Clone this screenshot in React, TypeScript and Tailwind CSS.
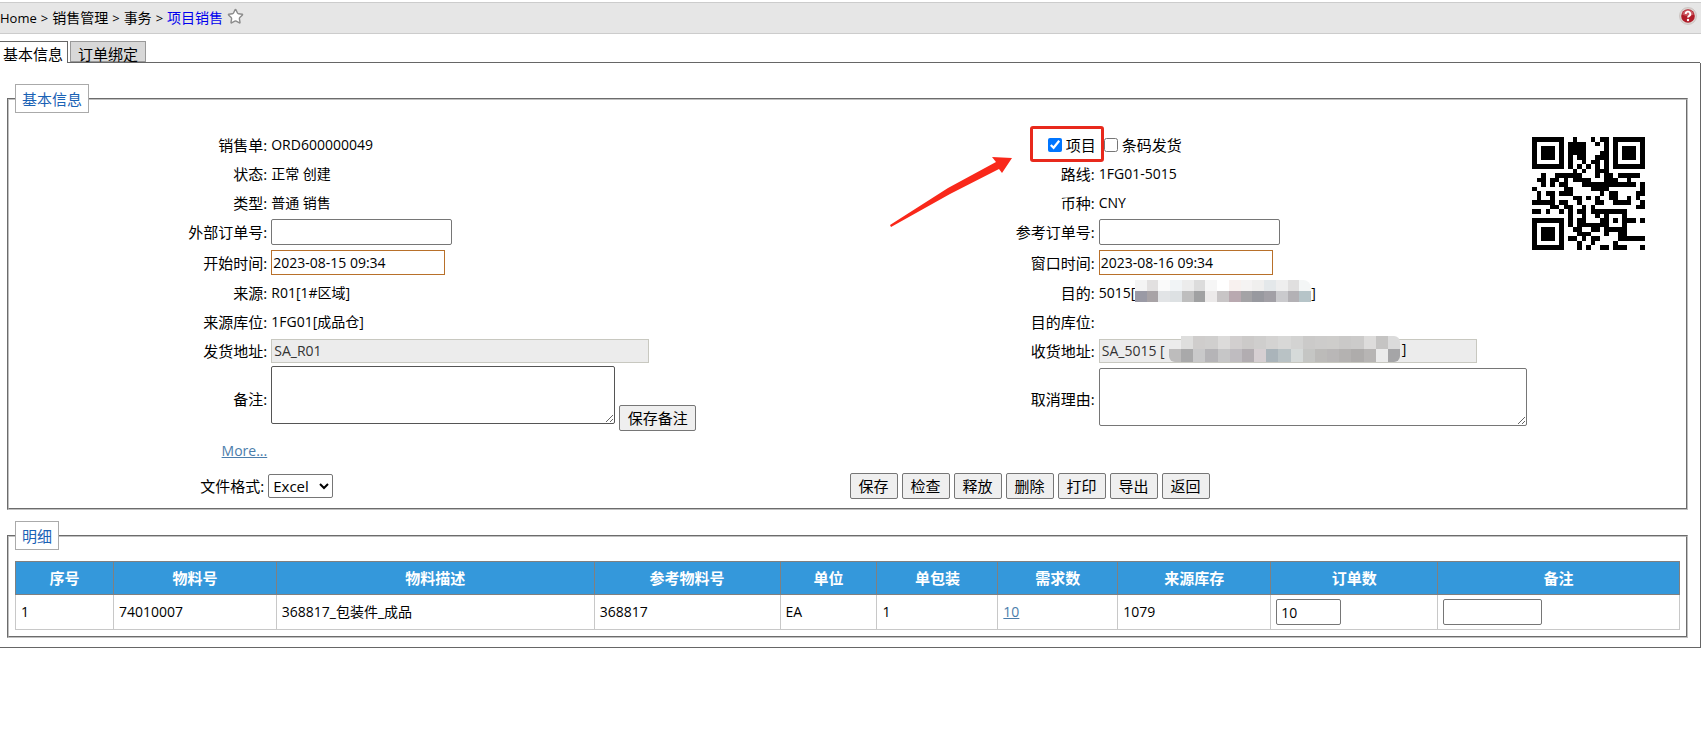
import React from 'react';
import { Star } from 'lucide-react';

const order = {
  code: 'ORD600000049',
  status: '正常 创建',
  type: '普通 销售',
  route: '1FG01-5015',
  currency: 'CNY',
  startTime: '2023-08-15 09:34',
  windowTime: '2023-08-16 09:34',
  source: 'R01[1#区域]',
  sourceBin: '1FG01[成品仓]',
  shipFrom: 'SA_R01',
};

const columns = [
  { title: '序号', width: 98 },
  { title: '物料号', width: 163 },
  { title: '物料描述', width: 318 },
  { title: '参考物料号', width: 186 },
  { title: '单位', width: 97 },
  { title: '单包装', width: 121 },
  { title: '需求数', width: 120 },
  { title: '来源库存', width: 153 },
  { title: '订单数', width: 167 },
  { title: '备注', width: 242 },
];
const totalWidth = columns.reduce((sum, c) => sum + c.width, 0);

const actions = ['保存', '检查', '释放', '删除', '打印', '导出', '返回'];

/* QR code, version 2, level H, mask 1, byte mode */
const QR_SIZE = 25;
const QR_DATA = 16;
const QR_ECC = 28;
const QR_FORMAT = '001001110111110';

const gfMul = (a: number, b: number) => {
  let r = 0;
  for (let i = 7; i >= 0; i--) {
    r = (r << 1) ^ ((r >> 7) * 0x11d);
    r ^= ((b >> i) & 1) * a;
  }
  return r;
};

const qrCodewords = (text: string) => {
  let bits = '0100' + text.length.toString(2).padStart(8, '0');
  for (const ch of text) bits += ch.charCodeAt(0).toString(2).padStart(8, '0');
  bits += '0000';
  const data: number[] = [];
  for (let i = 0; i < bits.length; i += 8) data.push(parseInt(bits.slice(i, i + 8), 2));
  for (let pad = 0xec; data.length < QR_DATA; pad ^= 0xec ^ 0x11) data.push(pad);

  const gen: number[] = new Array(QR_ECC).fill(0);
  gen[QR_ECC - 1] = 1;
  let root = 1;
  for (let i = 0; i < QR_ECC; i++) {
    for (let j = 0; j < QR_ECC; j++) {
      gen[j] = gfMul(gen[j], root) ^ (j + 1 < QR_ECC ? gen[j + 1] : 0);
    }
    root = gfMul(root, 2);
  }
  const ecc: number[] = new Array(QR_ECC).fill(0);
  data.forEach((d) => {
    const factor = d ^ ecc.shift()!;
    ecc.push(0);
    gen.forEach((g, i) => { ecc[i] ^= gfMul(g, factor); });
  });
  return [...data, ...ecc];
};

const qrMatrix = (text: string) => {
  const m: (number | null)[][] = Array.from({ length: QR_SIZE }, () => new Array(QR_SIZE).fill(null));
  for (let i = 0; i < QR_SIZE; i++) {
    m[6][i] = (i + 1) % 2;
    m[i][6] = (i + 1) % 2;
  }
  [[3, 3], [3, 21], [21, 3]].forEach(([cy, cx]) => {
    for (let dy = -4; dy <= 4; dy++) {
      for (let dx = -4; dx <= 4; dx++) {
        const y = cy + dy;
        const x = cx + dx;
        if (y < 0 || x < 0 || y >= QR_SIZE || x >= QR_SIZE) continue;
        const d = Math.max(Math.abs(dy), Math.abs(dx));
        m[y][x] = d === 2 || d === 4 ? 0 : 1;
      }
    }
  });
  for (let dy = -2; dy <= 2; dy++) {
    for (let dx = -2; dx <= 2; dx++) {
      m[18 + dy][18 + dx] = Math.max(Math.abs(dy), Math.abs(dx)) === 1 ? 0 : 1;
    }
  }
  const f = QR_FORMAT.split('').map(Number);
  for (let i = 0; i < 15; i++) {
    if (i < 7) {
      m[8][i < 6 ? i : 7] = f[i];
      m[24 - i][8] = f[i];
    } else {
      m[i < 9 ? 15 - i : 14 - i][8] = f[i];
      m[8][10 + i] = f[i];
    }
  }
  m[17][8] = 1;

  const words = qrCodewords(text);
  let n = 0;
  let up = true;
  for (let right = QR_SIZE - 1; right > 0; right -= 2) {
    if (right === 6) right = 5;
    for (let v = 0; v < QR_SIZE; v++) {
      const y = up ? QR_SIZE - 1 - v : v;
      for (const x of [right, right - 1]) {
        if (m[y][x] !== null) continue;
        const bit = n < words.length * 8 ? (words[n >> 3] >> (7 - (n & 7))) & 1 : 0;
        m[y][x] = bit ^ (y % 2 === 0 ? 1 : 0);
        n++;
      }
    }
    up = !up;
  }
  return m;
};

const QrCode = ({ text, className }: { text: string; className?: string }) => {
  const path = qrMatrix(text)
    .map((row, y) => row.map((on, x) => (on ? `M${x} ${y}h1v1h-1z` : '')).join(''))
    .join('');
  return (
    <svg viewBox="0 0 25 25" className={className} role="img" aria-label={text} shapeRendering="crispEdges">
      <path d={path} />
    </svg>
  );
};

/* Pixelated cover over private text, one row of tiles per list */
const Mosaic = ({ rows, className }: { rows: string[][]; className?: string }) => (
  <svg
    viewBox={`0 0 ${rows[0].length * 12} 24`}
    preserveAspectRatio="none"
    shapeRendering="crispEdges"
    className={className}
    aria-hidden="true"
  >
    {rows.map((row, y) =>
      row.map((fill, x) => <rect key={`${x}-${y}`} x={x * 12} y={y * 12} width="12" height="12" fill={fill} />)
    )}
  </svg>
);

const destMosaic = [
  ['#f4f4f4', '#e2e0e0', '#fafafa', '#f1f4f6', '#ececec', '#dcdcdc', '#f6f6f6', '#ffffff', '#f8f1ef', '#f5f3f3', '#f0efee', '#e4e8ea', '#eeeeee', '#e0dfdf', '#f4f6f6'],
  ['#9a9aa5', '#a8a3a6', '#e2e4e6', '#dde1e3', '#bebebe', '#a0a1a2', '#eceaea', '#c8c5c6', '#b9a9b0', '#a4a3a6', '#98999f', '#a2a0a6', '#cacacd', '#b3b1b5', '#b6c4c8'],
];
const addressMosaic = [
  ['none', '#dededd', '#cfcdcc', '#d0cfce', '#dcdbda', '#d2cfcf', '#cccac9', '#cfcecd', '#d4d3d2', '#d8d8d7', '#d3d3d2', '#cbcac9', '#cdcccb', '#cecdcb', '#cac9c8', '#cccbca', '#dddcdb', '#c5c4c3', '#dbdbdb'],
  ['#bdbcbc', '#a9a9aa', '#c9c9ca', '#b5b4b7', '#c6c6c7', '#bfbcc0', '#b2adb1', '#d6cfd2', '#aab4ba', '#b9c2c5', '#d6dad9', '#c5c6c4', '#bcbbb9', '#b9b7b7', '#b4b2b1', '#aeacab', '#b7b5b4', '#ebebeb', '#a5a5a7'],
];

const Label = ({ text, htmlFor }: { text: string; htmlFor?: string }) =>
  htmlFor ? (
    <label htmlFor={htmlFor} className="self-center pr-px text-right">{text}:</label>
  ) : (
    <span className="self-center pr-px text-right">{text}:</span>
  );

const Value = ({ children, wide }: { children?: React.ReactNode; wide?: boolean }) => (
  <div className={wide ? 'relative col-span-2 flex items-center pl-[3px] text-sm' : 'relative flex items-center pl-[3px] text-sm'}>
    {children}
  </div>
);

const Legend = ({ children }: { children: React.ReactNode }) => (
  <legend className="border border-[#aaaaaa] px-1.5 pt-1 pb-[3px] text-[#1a62b5]">{children}</legend>
);

const inputClass = 'h-[26px] rounded-[2px] border border-[#767676] bg-white px-1 text-sm';
const dateClass = 'h-[25px] w-[174px] border border-[#b8702a] bg-white px-px text-sm';
const readonlyClass = 'h-6 w-[378px] border border-[#c8c8c0] bg-[#ececec] px-0.5 text-sm text-[#333333]';
const buttonClass = 'h-[26px] rounded-[2px] border border-[#767676] bg-[#efefef]';
const fieldsetClass = 'min-w-0 border-2 border-[#c0c0c0] [border-style:groove] px-1.5 pb-1.5';

export default function App() {
  return (
    <div className="bg-white pt-0.5 font-['Open_Sans','Noto_Sans_CJK_SC',sans-serif] text-[15px] leading-5 text-black">
      {/* Breadcrumb */}
      <header className="flex h-8 items-center justify-between border-y border-[#cccccc] bg-[#e6e6e6] pr-1">
        <nav className="flex items-center gap-1 text-sm">
          <span className="text-[13px]">Home</span>
          <span className="text-[13px]">&gt;</span>
          <span>销售管理</span>
          <span className="text-[13px]">&gt;</span>
          <span>事务</span>
          <span className="text-[13px]">&gt;</span>
          <a href="#" className="text-[#0000ee]">项目销售</a>
          <button type="button" aria-label="收藏" className="mb-1">
            <Star size={17} strokeWidth={2} className="fill-white text-[#8c8c8c]" />
          </button>
        </nav>
        <button type="button" aria-label="帮助" className="mb-1">
          <svg viewBox="0 0 18 18" className="size-[18px]">
            <circle cx="9" cy="9" r="8.5" fill="#dcd5d2" stroke="#bdb3b0" strokeWidth="0.6" />
            <circle cx="9" cy="9" r="6.8" fill="#b01c28" />
            <path d="M3.2 7.5a6 6 0 0 1 11.6 0c-3 1.8-8.6 1.8-11.6 0z" fill="#cc5a62" />
            <path d="M6.7 7a2.3 2.3 0 1 1 3.5 1.9c-.8.5-1.2.8-1.2 1.7" fill="none" stroke="#fff" strokeWidth="1.9" />
            <circle cx="9" cy="13" r="1.2" fill="#fff" />
          </svg>
        </button>
      </header>

      {/* Tabs */}
      <div className="flex items-end border-r border-transparent pt-[7px]">
        <button type="button" className="h-[22px] border-t border-r border-[#666666] bg-white pt-0.5 pr-1 pl-[3px] leading-5">基本信息</button>
        <div className="flex h-[22px] flex-1 items-end border-b border-[#666666] pl-0.5">
          <button type="button" className="h-[21px] border border-[#999999] bg-[#d8d8d8] px-[7px] pt-0.5 leading-5">订单绑定</button>
        </div>
      </div>

      <main className="border-r border-b border-[#666666] pt-[21px] pr-3 pb-[9px] pl-[7px]">
        {/* Order header */}
        <fieldset className={fieldsetClass}>
          <Legend>基本信息</Legend>
          <div className="grid grid-cols-[15fr_35fr_15fr_25fr_10fr] grid-rows-[29px_29px_29px_30px_31px_29px_29px_29px_67px_38px] pt-[17px] pr-[5px] pl-[5px]">
            <div className="col-start-5 row-span-5 row-start-1 justify-self-end pt-[7px] pr-[30px]">
              <QrCode text={order.code} className="size-[113px]" />
            </div>

            <Label text="销售单" />
            <Value>{order.code}</Value>
            <div className="flex items-center justify-end">
              <div className="relative">
                <label className="flex items-center gap-1">
                  <input type="checkbox" defaultChecked className="size-[14px]" />
                  项目
                </label>
                <span className="absolute -top-[9px] -right-2 -bottom-[7px] -left-[18px] rounded-[3px] border-3 border-[#e8291c]" />
                <svg viewBox="0 0 124 72" className="absolute top-[21px] right-full mr-9 h-[72px] w-[124px]" aria-hidden="true">
                  <path d="M2 69L60 32L108 6L104 1L124 2L114 17L111 13L62 38L3 71z" fill="#f9281a" />
                </svg>
              </div>
            </div>
            <div className="flex items-center pl-2">
              <label className="flex items-center gap-1">
                <input type="checkbox" className="size-[14px]" />
                条码发货
              </label>
            </div>

            <Label text="状态" />
            <Value>{order.status}</Value>
            <Label text="路线" />
            <Value>{order.route}</Value>

            <Label text="类型" />
            <Value>{order.type}</Value>
            <Label text="币种" />
            <Value>{order.currency}</Value>

            <Label text="外部订单号" htmlFor="extOrder" />
            <Value><input id="extOrder" className={`${inputClass} w-[181px]`} /></Value>
            <Label text="参考订单号" htmlFor="refOrder" />
            <Value><input id="refOrder" className={`${inputClass} w-[181px]`} /></Value>

            <Label text="开始时间" htmlFor="startTime" />
            <Value><input id="startTime" defaultValue={order.startTime} className={dateClass} /></Value>
            <Label text="窗口时间" htmlFor="windowTime" />
            <Value><input id="windowTime" defaultValue={order.windowTime} className={dateClass} /></Value>

            <Label text="来源" />
            <Value>{order.source}</Value>
            <Label text="目的" />
            <Value wide>
              5015[
              <Mosaic rows={destMosaic} className="mb-1 h-[22px] w-[176px] rounded-tr-lg" />
              ]
            </Value>

            <Label text="来源库位" />
            <Value>{order.sourceBin}</Value>
            <Label text="目的库位" />
            <Value wide />

            <Label text="发货地址" htmlFor="shipFrom" />
            <Value><input id="shipFrom" readOnly value={order.shipFrom} className={readonlyClass} /></Value>
            <Label text="收货地址" htmlFor="shipTo" />
            <Value wide>
              <input id="shipTo" readOnly value="SA_5015 [" className={readonlyClass} />
              <div className="absolute top-0 left-[73px] flex items-center">
                <Mosaic rows={addressMosaic} className="h-[26px] w-[231px] rounded-md" />
                <span className="pl-0.5">]</span>
              </div>
            </Value>

            <Label text="备注" htmlFor="remark" />
            <div className="flex items-start gap-1 pt-px pb-px pl-[3px]">
              <textarea id="remark" className="h-[58px] w-[344px] resize rounded-[2px] border border-[#555555]" />
              <button type="button" className={`${buttonClass} w-[77px] self-end`}>保存备注</button>
            </div>
            <Label text="取消理由" htmlFor="cancelReason" />
            <div className="col-span-2 flex items-start pt-[3px] pl-[3px]">
              <textarea id="cancelReason" className="h-[58px] w-[428px] resize rounded-[2px] border border-[#767676]" />
            </div>

            <a href="#" className="self-center justify-self-end pr-px text-sm text-[#4b7dab] underline">More...</a>
          </div>

          <div className="grid h-8 grid-cols-[15fr_35fr_50fr] items-center pr-[5px] pl-[5px]">
            <label htmlFor="format" className="pr-1 text-right">文件格式:</label>
            <div className="flex">
              <select id="format" className="h-6 w-[65px] rounded-[2px] border border-[#767676] bg-white text-[15px]">
                <option>Excel</option>
              </select>
            </div>
            <div className="flex gap-1 pl-0.5">
              {actions.map((action) => (
                <button key={action} type="button" className={`${buttonClass} w-12`}>{action}</button>
              ))}
            </div>
          </div>
        </fieldset>

        {/* Details */}
        <fieldset className={`${fieldsetClass} mt-[11px]`}>
          <Legend>明细</Legend>
          <div className="pt-[11px]">
            <table className="w-full table-fixed border-collapse">
              <colgroup>
                {columns.map((c) => (
                  <col key={c.title} style={{ width: `${(c.width / totalWidth) * 100}%` }} />
                ))}
              </colgroup>
              <thead>
                <tr className="h-[33px] bg-[#3498db] text-white">
                  {columns.map((c) => (
                    <th key={c.title} className="border border-[#808080] font-bold">{c.title}</th>
                  ))}
                </tr>
              </thead>
              <tbody>
                <tr className="h-[35px] text-sm [&>td]:border [&>td]:border-[#c8c8c8] [&>td]:px-[5px]">
                  <td>1</td>
                  <td>74010007</td>
                  <td>368817_包装件_成品</td>
                  <td>368817</td>
                  <td>EA</td>
                  <td>1</td>
                  <td><a href="#" className="text-[#4b7dab] underline">10</a></td>
                  <td>1079</td>
                  <td><input aria-label="订单数" defaultValue="10" className={`${inputClass} block w-[65px]`} /></td>
                  <td><input aria-label="备注" className={`${inputClass} block w-[99px]`} /></td>
                </tr>
              </tbody>
            </table>
          </div>
        </fieldset>
      </main>
    </div>
  );
}
